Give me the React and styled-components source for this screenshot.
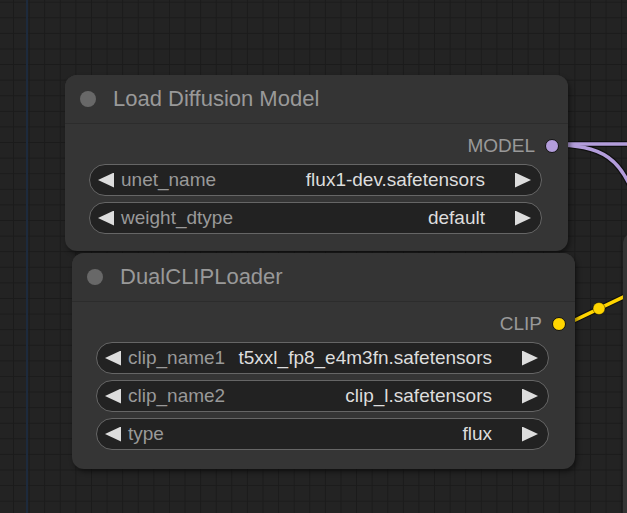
import React from "react";
import styled, { createGlobalStyle } from "styled-components";

const Global = createGlobalStyle`
  html, body {
    margin: 0;
    padding: 0;
    background: #222;
    overflow: hidden;
  }
  body {
    font-family: "Liberation Sans", Arial, sans-serif;
  }
`;

const Canvas = styled.div`
  position: relative;
  width: 627px;
  height: 513px;
  overflow: hidden;
  background-color: #232323;
  background-image: linear-gradient(to right, #1b1b1b 1px, transparent 1px),
    linear-gradient(to bottom, #1b1b1b 1px, transparent 1px);
  background-size: 15.6px 15.6px;
  background-position: 13px 1.7px;
`;

const Guide = styled.div`
  position: absolute;
  left: 26px;
  top: 0;
  bottom: 0;
  width: 2px;
  background: #1d2a3c;
`;

const Wires = styled.svg`
  position: absolute;
  left: 0;
  top: 0;
`;

const Node = styled.div`
  position: absolute;
  left: ${(p) => p.$x}px;
  top: ${(p) => p.$y}px;
  width: ${(p) => p.$w}px;
  height: ${(p) => p.$h}px;
  box-sizing: border-box;
  background: #353535;
  border-radius: 12px;
  box-shadow: 2px 3px 5px rgba(0, 0, 0, 0.45);
  display: flex;
  flex-direction: column;
`;

const Title = styled.div`
  height: 48px;
  display: flex;
  align-items: center;
  gap: 17px;
  padding-left: 15px;
  background: #343434;
  border-radius: 12px 12px 0 0;
  border-bottom: 1px solid #2c2c2c;
  color: #999;
  font-size: 22px;
`;

const TitleDot = styled.span`
  width: 16px;
  height: 16px;
  border-radius: 50%;
  background: #686868;
`;

const Body = styled.div`
  display: flex;
  flex-direction: column;
  padding: 12px 26px 0 24px;
`;

const Output = styled.div`
  height: 20px;
  margin-right: -17px;
  margin-bottom: 8px;
  display: flex;
  align-items: center;
  justify-content: flex-end;
  gap: 10px;
  color: #999;
  font-size: 19px;
`;

const Slot = styled.span`
  width: 14px;
  height: 14px;
  box-sizing: border-box;
  border-radius: 50%;
  border: 1.5px solid #111;
  background: ${(p) => p.$color};
`;

const Widget = styled.div`
  height: 32px;
  box-sizing: border-box;
  margin-bottom: 6px;
  border: 1px solid #666;
  border-radius: 16px;
  background: #222;
  display: flex;
  align-items: center;
  padding: 0 10px 0 8px;
  font-size: 19px;
`;

const Arrow = styled.span`
  width: 16px;
  height: 15px;
  background: #ddd;
  clip-path: ${(p) =>
    p.$dir === "left"
      ? "polygon(100% 0, 0 50%, 100% 100%)"
      : "polygon(0 0, 100% 50%, 0 100%)"};
`;

const Label = styled.span`
  color: #999;
  margin-left: 7px;
`;

const Value = styled.span`
  color: #ddd;
  margin-left: auto;
  margin-right: 30px;
  white-space: nowrap;
`;

const Combo = ({ label, value }) => (
  <Widget>
    <Arrow $dir="left" />
    <Label>{label}</Label>
    <Value>{value}</Value>
    <Arrow $dir="right" />
  </Widget>
);

export default function App() {
  return (
    <>
      <Global />
      <Canvas>
        <Guide />
        <Wires width="627" height="513">
          <g fill="none" strokeLinecap="round">
            <path d="M552 144 H640" stroke="rgba(0,0,0,0.55)" strokeWidth="6" />
            <path d="M552 145 C600 145, 625 155, 640 215" stroke="rgba(0,0,0,0.55)" strokeWidth="6" />
            <path d="M552 144 H640" stroke="#b39ddb" strokeWidth="3.5" />
            <path d="M552 145 C600 145, 625 155, 640 215" stroke="#b39ddb" strokeWidth="3.5" />
            <path d="M557 324 L575 320 L640 289" stroke="rgba(0,0,0,0.5)" strokeWidth="6" />
            <path d="M557 324 L575 320 L640 289" stroke="#ffd500" strokeWidth="3.5" />
          </g>
          <circle cx="599" cy="308.5" r="6" fill="#ffd500" stroke="rgba(0,0,0,0.4)" strokeWidth="1" />
        </Wires>

        <Node $x={623} $y={232} $w={220} $h={320} />

        <Node $x={65} $y={75} $w={503} $h={176}>
          <Title>
            <TitleDot />
            Load Diffusion Model
          </Title>
          <Body>
            <Output>
              MODEL
              <Slot $color="#b39ddb" />
            </Output>
            <Combo label="unet_name" value="flux1-dev.safetensors" />
            <Combo label="weight_dtype" value="default" />
          </Body>
        </Node>

        <Node $x={72} $y={253} $w={503} $h={216}>
          <Title>
            <TitleDot />
            DualCLIPLoader
          </Title>
          <Body>
            <Output>
              CLIP
              <Slot $color="#ffd500" />
            </Output>
            <Combo label="clip_name1" value="t5xxl_fp8_e4m3fn.safetensors" />
            <Combo label="clip_name2" value="clip_l.safetensors" />
            <Combo label="type" value="flux" />
          </Body>
        </Node>
      </Canvas>
    </>
  );
}
